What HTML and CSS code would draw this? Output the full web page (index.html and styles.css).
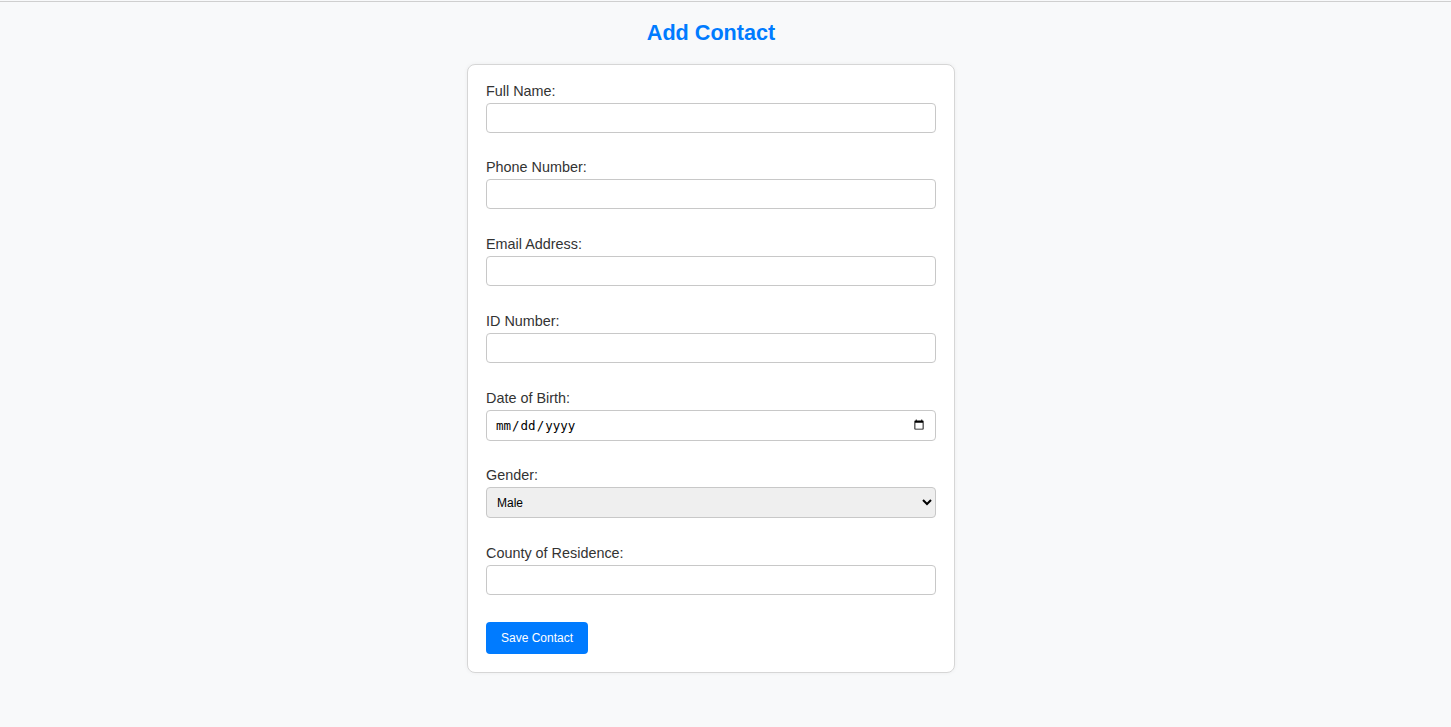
FILE: index.html
```html
<!DOCTYPE html>
<html lang="en">
<head>
<meta charset="utf-8">
<title>Add Contact</title>
<link rel="stylesheet" href="styles.css">
</head>
<body>
<div class="page">
  <h1 class="title">Add Contact</h1>
  <form class="card">
    <div class="field">
      <label class="label" for="name">Full Name:</label>
      <input class="input" id="name" type="text">
    </div>
    <div class="field">
      <label class="label" for="phone">Phone Number:</label>
      <input class="input" id="phone" type="text">
    </div>
    <div class="field">
      <label class="label" for="email">Email Address:</label>
      <input class="input" id="email" type="email">
    </div>
    <div class="field">
      <label class="label" for="idnum">ID Number:</label>
      <input class="input" id="idnum" type="text">
    </div>
    <div class="field">
      <label class="label" for="dob">Date of Birth:</label>
      <input class="input input-date" id="dob" type="date">
    </div>
    <div class="field">
      <label class="label" for="gender">Gender:</label>
      <select class="input input-select" id="gender">
        <option>Male</option>
        <option>Female</option>
      </select>
    </div>
    <div class="field">
      <label class="label" for="county">County of Residence:</label>
      <input class="input" id="county" type="text">
    </div>
    <div class="actions">
      <button class="btn" type="submit">Save Contact</button>
    </div>
  </form>
</div>
</body>
</html>
```

FILE: styles.css
```css
html {
  background: #f8f9fa;
  padding-top: 1px;
}
body {
  margin: 0;
  border-top: 1px solid #cfcfcf;
  font-family: "Liberation Sans", Arial, sans-serif;
  color: #333;
}
.page {
  padding-right: 29px;
  display: flex;
  flex-direction: column;
  align-items: center;
}
.title {
  margin: 18px 0 18.5px;
  font-size: 21.6px;
  line-height: 25px;
  font-weight: bold;
  color: #007bff;
}
.card {
  box-sizing: border-box;
  width: 488px;
  background: #fff;
  border: 1px solid #d6d6d6;
  border-radius: 8px;
  box-shadow: 0 0 4px rgba(0, 0, 0, 0.05);
  padding: 18px;
  display: flex;
  flex-direction: column;
  gap: 26.75px;
  margin-bottom: 40px;
}
.field {
  display: flex;
  flex-direction: column;
}
.label {
  font-size: 14.4px;
  line-height: 16px;
  margin-bottom: 4px;
  color: #333;
}
.input {
  box-sizing: border-box;
  width: 100%;
  height: 30px;
  margin: 0;
  border: 1px solid #c8c8c8;
  border-radius: 4px;
  background: #fff;
  padding: 0 8px;
  font-family: "Liberation Sans", Arial, sans-serif;
  font-size: 12px;
  color: #000;
}
.input-date {
  height: 31px;
  font-family: "DejaVu Sans Mono", monospace;
  font-size: 12.5px;
}
.input-select {
  height: 31px;
  background: #efefef;
  padding: 0 6px;
}
.actions {
  display: flex;
}
.btn {
  height: 32px;
  padding: 0 15px;
  border: none;
  border-radius: 4px;
  background: #007bff;
  color: #fff;
  font-family: "Liberation Sans", Arial, sans-serif;
  font-size: 12px;
  cursor: pointer;
}
```
